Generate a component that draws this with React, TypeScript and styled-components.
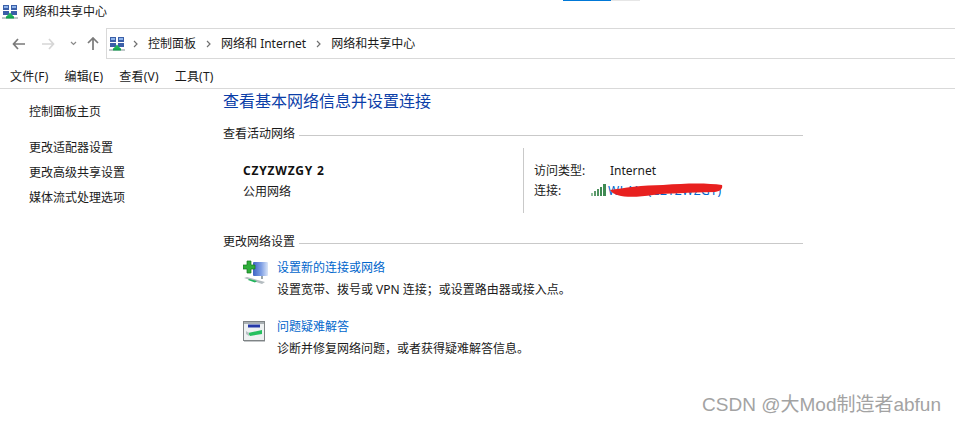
import React, { FC } from 'react'
import styled, { createGlobalStyle } from 'styled-components'

const GlobalStyle = createGlobalStyle`
  html, body {
    margin: 0;
    padding: 0;
    background: #ffffff;
  }
  body {
    font-family: "Noto Sans", "Noto Sans CJK SC", sans-serif;
    font-size: 12px;
    color: #1a1a1a;
  }
`

const Page = styled('div')`
  position: relative;
  width: 955px;
  height: 423px;
  overflow: hidden;
  background: #ffffff;
`

const TitleBar = styled('div')`
  display: flex;
  align-items: center;
  gap: 5px;
  height: 28px;
  padding: 0 0 4px 2px;
  box-sizing: border-box;
`

const TitleText = styled('span')`
  font-size: 12px;
  line-height: 16px;
`

const TabStrip = styled('div')`
  position: absolute;
  top: 0;
  left: 563px;
  display: flex;
  height: 1px;
`

const TabPiece = styled('div')<{ $w: number; $c: string }>`
  width: ${(p) => p.$w}px;
  background: ${(p) => p.$c};
`

const NavRow = styled('div')`
  display: flex;
  height: 31px;
`

const NavButtons = styled('div')`
  display: flex;
  align-items: center;
  width: 106px;
  padding-left: 12px;
  box-sizing: border-box;
  flex: none;
`

const NavBtn = styled('span')<{ $w: number }>`
  display: flex;
  width: ${(p) => p.$w}px;
  flex: none;
`

const AddressBar = styled('div')`
  flex: 1;
  display: flex;
  align-items: center;
  border: 1px solid #d9d9d9;
  border-right: none;
  padding-left: 2px;
`

const Crumb = styled('span')`
  font-size: 12px;
  line-height: 16px;
  color: #1a1a1a;
`

const Chevron = styled('svg')<{ $l: number }>`
  flex: none;
  margin: 0 10px 0 ${(p) => p.$l}px;
`

const ArrowSvg = styled('svg')<{ $flip?: boolean }>`
  transform: ${(p) => (p.$flip ? 'scaleX(-1)' : 'none')};
`

const MenuBar = styled('div')`
  display: flex;
  gap: 16px;
  height: 30px;
  padding: 10px 0 0 10px;
  box-sizing: border-box;
  border-bottom: 1px solid #d9d9d9;
`

const MenuItem = styled('span')`
  font-size: 12px;
  line-height: 16px;
  letter-spacing: 0.2px;
`

const Body = styled('div')`
  display: flex;
`

const Sidebar = styled('nav')`
  flex: none;
  width: 223px;
  box-sizing: border-box;
  padding: 15px 0 0 29px;
  display: flex;
  flex-direction: column;
`

const SideLink = styled('a')<{ $gap?: number }>`
  font-size: 12px;
  line-height: 16px;
  color: #1a1a1a;
  height: 25px;
  margin-bottom: ${(p) => p.$gap ?? 0}px;
`

const Content = styled('main')`
  width: 580px;
  flex: none;
`

const Heading = styled('h1')`
  margin: 2px 0 0;
  font-size: 16px;
  line-height: 20px;
  font-weight: 400;
  color: #0b3ea8;
`

const SectionHead = styled('div')<{ $top: number }>`
  display: flex;
  gap: 4px;
  margin-top: ${(p) => p.$top}px;
  font-size: 12px;
  line-height: 16px;
`

const SectionRule = styled('div')`
  flex: 1;
  height: 1px;
  margin-top: 9px;
  background: #c9c9c9;
`

const ActiveNetwork = styled('div')`
  display: flex;
  height: 65px;
  margin-top: 6px;
`

const NetworkName = styled('div')`
  width: 300px;
  flex: none;
  padding: 13px 0 0 20px;
  box-sizing: border-box;
`

const NetName = styled('div')`
  font-weight: 700;
  font-size: 12px;
  line-height: 20px;
  letter-spacing: 0.8px;
  color: #111111;
`

const NetKind = styled('div')`
  font-size: 12px;
  line-height: 21px;
`

const NetworkInfo = styled('div')`
  flex: 1;
  border-left: 1px solid #c9c9c9;
  padding: 12px 0 0 10px;
`

const InfoRow = styled('div')`
  display: flex;
  align-items: center;
  height: 20px;
`

const InfoLabel = styled('span')`
  width: 57px;
  flex: none;
`

const InfoValue = styled('span')<{ $ml?: number }>`
  display: flex;
  align-items: center;
  gap: 1px;
  margin-left: ${(p) => p.$ml ?? 0}px;
`

const ConnLink = styled('span')`
  position: relative;
  color: #0066cc;
  white-space: nowrap;
  letter-spacing: 0.5px;
`

const Scribble = styled('svg')`
  position: absolute;
  left: -5px;
  top: 0;
`

const TaskRow = styled('div')<{ $top: number }>`
  display: flex;
  margin: ${(p) => p.$top}px 0 0 20px;
`

const TaskIcon = styled('svg')`
  flex: none;
  margin-right: 8px;
`

const TaskText = styled('div')`
  display: flex;
  flex-direction: column;
  gap: 6px;
`

const TaskLink = styled('a')`
  font-size: 12px;
  line-height: 16px;
  color: #0066cc;
`

const TaskDesc = styled('div')`
  font-size: 12px;
  line-height: 16px;
`

const Watermark = styled('div')`
  position: absolute;
  right: 14px;
  bottom: 6px;
  font-size: 19px;
  line-height: 24px;
  color: #a3a3a3;
  font-family: "Liberation Sans", "Noto Sans CJK SC", sans-serif;
`

const NetCenterIcon: FC = () => (
  <svg width="16" height="16" viewBox="0 0 16 16">
    <rect x="1" y="1" width="6" height="5" fill="#3b5fa8" />
    <rect x="9" y="1" width="6" height="5" fill="#3b5fa8" />
    <rect x="2" y="2" width="4" height="2" fill="#8fb4ea" />
    <rect x="10" y="2" width="4" height="2" fill="#8fb4ea" />
    <rect x="1" y="7" width="6" height="4" fill="#3b5fa8" />
    <rect x="9" y="7" width="6" height="4" fill="#3b5fa8" />
    <path d="M8 8.5 L12 13 H4 Z" fill="#1fb45a" />
    <rect x="0" y="13" width="16" height="2" fill="#bfc7c9" />
    <rect x="4" y="12.5" width="8" height="2" fill="#12a34e" />
  </svg>
)

const Arrow: FC<{ color: string; flip?: boolean }> = ({ color, flip }) => (
  <ArrowSvg width="13" height="12" viewBox="0 0 13 12" $flip={flip}>
    <path d="M6 1 L1.5 6 L6 11 M2 6 H13" fill="none" stroke={color} strokeWidth="1.7" />
  </ArrowSvg>
)

const Sep: FC<{ left: number }> = ({ left }) => (
  <Chevron width="5" height="8" viewBox="0 0 5 8" $l={left}>
    <path d="M1 1 L4 4 L1 7" fill="none" stroke="#707070" strokeWidth="1.2" />
  </Chevron>
)

const SignalIcon: FC = () => (
  <svg width="16" height="12" viewBox="0 0 16 12">
    <rect x="0" y="9" width="2" height="3" fill="#8fbf9a" />
    <rect x="3" y="7" width="2" height="5" fill="#5d9a6b" />
    <rect x="6" y="5" width="2" height="7" fill="#4f9460" />
    <rect x="9" y="3" width="2" height="9" fill="#3f8a52" />
    <rect x="12" y="0" width="3" height="12" fill="#3f8a52" />
  </svg>
)

export default function App() {
  return (
    <Page>
      <GlobalStyle />
      <TabStrip>
        <TabPiece $w={48} $c="#0078d7" />
        <TabPiece $w={29} $c="#e6e6e6" />
      </TabStrip>
      <TitleBar>
        <NetCenterIcon />
        <TitleText>网络和共享中心</TitleText>
      </TitleBar>
      <NavRow>
        <NavButtons>
          <NavBtn $w={30}>
            <Arrow color="#7a7a7a" />
          </NavBtn>
          <NavBtn $w={28}>
            <Arrow color="#d6d6d6" flip />
          </NavBtn>
          <NavBtn $w={17}>
            <svg width="7" height="5" viewBox="0 0 7 5">
              <path d="M1 1 L3.5 3.5 L6 1" fill="none" stroke="#8a8a8a" strokeWidth="1.2" />
            </svg>
          </NavBtn>
          <NavBtn $w={14}>
            <svg width="12" height="13" viewBox="0 0 12 13">
              <path d="M1 6 L6 1 L11 6 M6 1.5 V13" fill="none" stroke="#7a7a7a" strokeWidth="1.7" />
            </svg>
          </NavBtn>
        </NavButtons>
        <AddressBar>
          <NetCenterIcon />
          <Sep left={8} />
          <Crumb>控制面板</Crumb>
          <Sep left={10} />
          <Crumb>网络和 Internet</Crumb>
          <Sep left={10} />
          <Crumb>网络和共享中心</Crumb>
        </AddressBar>
      </NavRow>
      <MenuBar>
        <MenuItem>文件(F)</MenuItem>
        <MenuItem>编辑(E)</MenuItem>
        <MenuItem>查看(V)</MenuItem>
        <MenuItem>工具(T)</MenuItem>
      </MenuBar>
      <Body>
        <Sidebar>
          <SideLink $gap={11}>控制面板主页</SideLink>
          <SideLink>更改适配器设置</SideLink>
          <SideLink>更改高级共享设置</SideLink>
          <SideLink>媒体流式处理选项</SideLink>
        </Sidebar>
        <Content>
          <Heading>查看基本网络信息并设置连接</Heading>
          <SectionHead $top={15}>
            查看活动网络
            <SectionRule />
          </SectionHead>
          <ActiveNetwork>
            <NetworkName>
              <NetName>CZYZWZGY 2</NetName>
              <NetKind>公用网络</NetKind>
            </NetworkName>
            <NetworkInfo>
              <InfoRow>
                <InfoLabel>访问类型:</InfoLabel>
                <InfoValue $ml={19}>Internet</InfoValue>
              </InfoRow>
              <InfoRow>
                <InfoLabel>连接:</InfoLabel>
                <InfoValue>
                  <SignalIcon />
                  <ConnLink>
                    WLAN (CZYZWZGY)
                    <Scribble width="122" height="18" viewBox="0 0 122 18">
                      <path
                        d="M7 8 C20 6 40 3 60 3 C85 1 105 1 119 3 C120 6 118 9 112 10 C85 11 65 11 50 13 C30 16 12 16 7 8 Z"
                        fill="#e8201f"
                      />
                    </Scribble>
                  </ConnLink>
                </InfoValue>
              </InfoRow>
            </NetworkInfo>
          </ActiveNetwork>
          <SectionHead $top={21}>
            更改网络设置
            <SectionRule />
          </SectionHead>
          <TaskRow $top={10}>
            <TaskIcon width="26" height="26" viewBox="0 0 26 26">
              <defs>
                <linearGradient id="screen" x1="0" x2="1" y1="0" y2="0">
                  <stop offset="0" stopColor="#3f63c4" />
                  <stop offset="0.55" stopColor="#7f9fe4" />
                  <stop offset="1" stopColor="#dbe6f8" />
                </linearGradient>
              </defs>
              <rect x="10" y="2" width="15" height="14" rx="1" fill="url(#screen)" />
              <rect x="18" y="16" width="2" height="3" fill="#9aa5a8" />
              <path d="M1 18 L4 17 L22 22 L19 24 Z" fill="#b4bcc0" />
              <path d="M6 19 L14 21 L12 22.5 L5 20 Z" fill="#1fb45a" />
              <path d="M4 1 H8 V5 H12 V9 H8 V13 H4 V9 H0 V5 H4 Z" fill="#2fae3a" stroke="#16761f" strokeWidth="0.7" />
            </TaskIcon>
            <TaskText>
              <TaskLink>设置新的连接或网络</TaskLink>
              <TaskDesc>设置宽带、拨号或 VPN 连接；或设置路由器或接入点。</TaskDesc>
            </TaskText>
          </TaskRow>
          <TaskRow $top={21}>
            <TaskIcon width="26" height="26" viewBox="0 0 26 26">
              <rect x="0.5" y="2.5" width="21" height="19" fill="#eef1f2" stroke="#7f8486" />
              <rect x="1" y="3" width="20" height="2" fill="#a9b0b3" />
              <path d="M5 5.5 H17 V8.5 H5 Z" fill="#2438a8" />
              <path d="M5 14 L19 11 V15 L7 17 Z" fill="#25c05f" />
              <path d="M3 12 L6 14 L6 17 L3 15 Z" fill="#b8c0c4" />
              <rect x="1" y="22" width="21" height="1" fill="#c4c7c9" />
            </TaskIcon>
            <TaskText>
              <TaskLink>问题疑难解答</TaskLink>
              <TaskDesc>诊断并修复网络问题，或者获得疑难解答信息。</TaskDesc>
            </TaskText>
          </TaskRow>
        </Content>
      </Body>
      <Watermark>CSDN @大Mod制造者abfun</Watermark>
    </Page>
  )
}
